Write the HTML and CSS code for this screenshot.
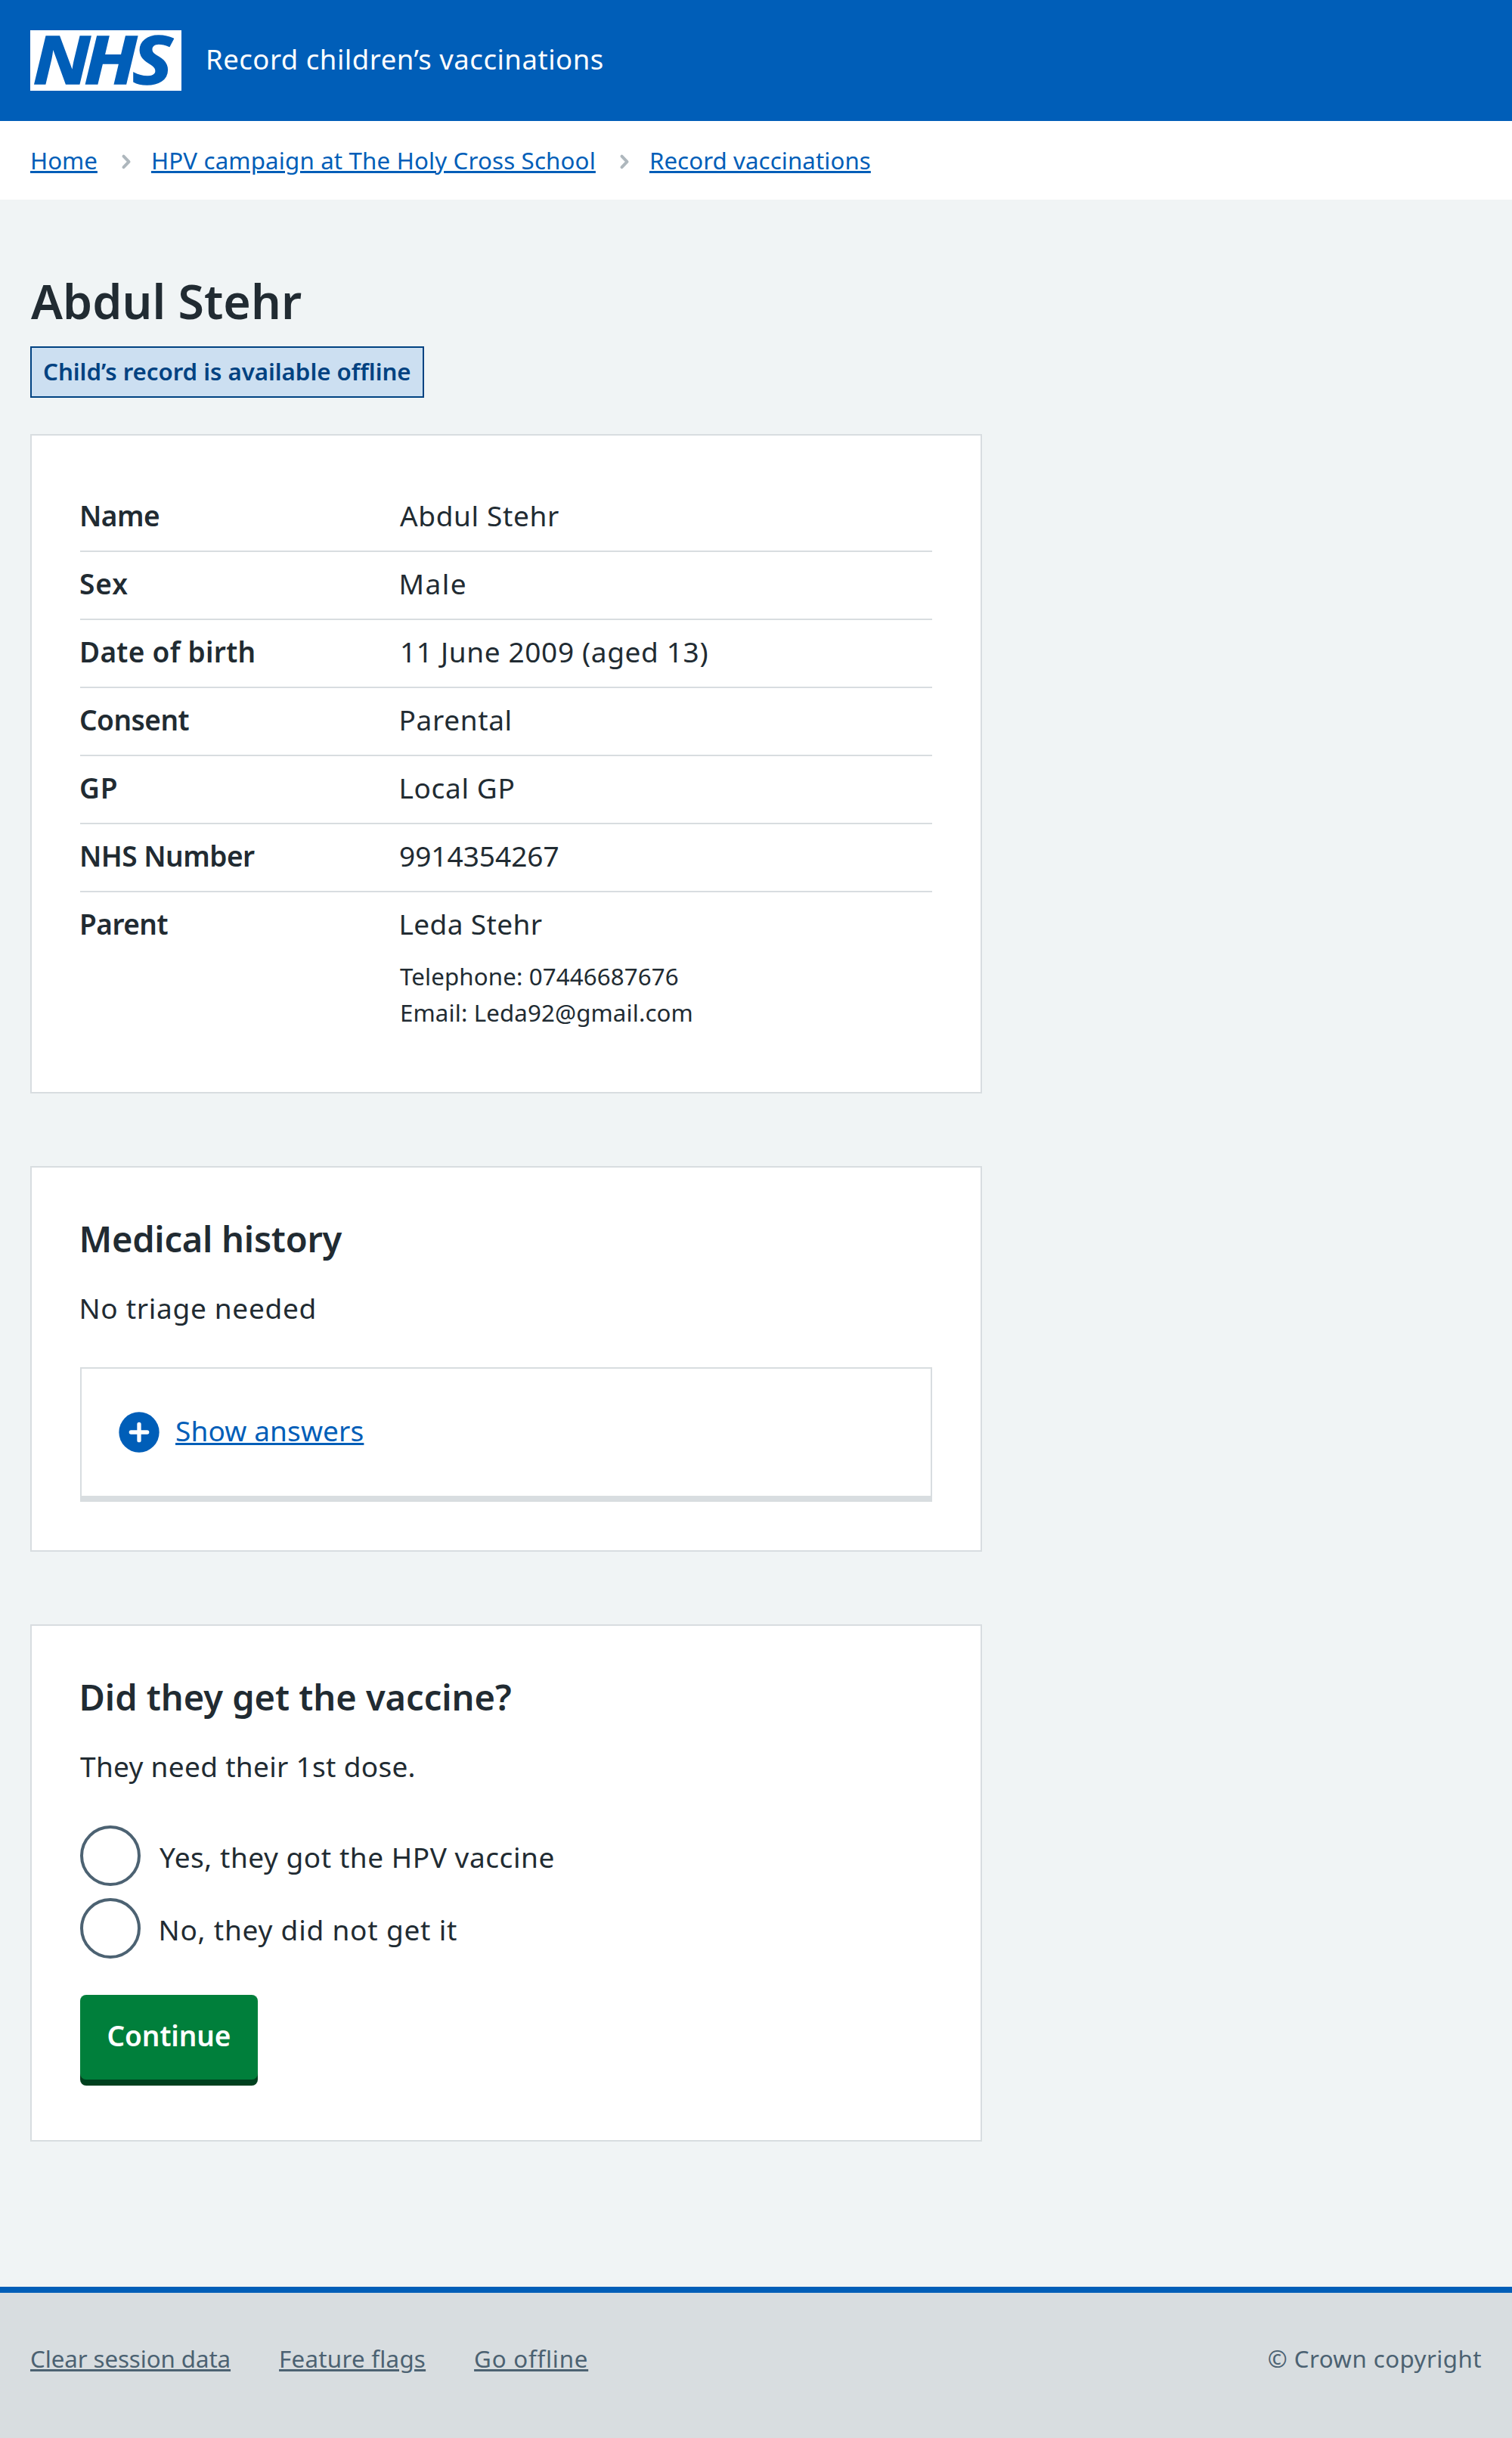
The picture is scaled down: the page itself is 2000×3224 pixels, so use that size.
FILE: index.html
```html
<!DOCTYPE html>
<html lang="en">
<head>
<meta charset="utf-8">
<title>Abdul Stehr – Record children’s vaccinations</title>
<link rel="stylesheet" href="styles.css">
</head>
<body>
<header class="header">
  <svg class="logo" width="200" height="80" viewBox="0 0 200 80" role="img" aria-label="NHS">
    <rect width="200" height="80" fill="#fff"/>
    <text class="logo-text" transform="scale(1.13 1)" x="3.1 62.8 119.5" y="71.3">NHS</text>
  </svg>
  <span class="service-name">Record children’s vaccinations</span>
</header>
<nav class="breadcrumb">
  <a class="crumb crumb-home" href="#">Home</a>
  <svg class="chevron" width="71" height="28" viewBox="0 0 71 28"><path d="M34.5 8.7l7 7.2-7 7.2"/></svg>
  <a class="crumb crumb-campaign" href="#">HPV campaign at The Holy Cross School</a>
  <svg class="chevron" width="71" height="28" viewBox="0 0 71 28"><path d="M34.5 8.7l7 7.2-7 7.2"/></svg>
  <a class="crumb crumb-record" href="#">Record vaccinations</a>
</nav>
<main class="main">
  <h1 class="page-title">Abdul Stehr</h1>
  <strong class="tag">Child’s record is available offline</strong>

  <section class="card card-details">
    <dl class="summary">
      <div class="row"><dt class="tight">Name</dt><dd>Abdul Stehr</dd></div>
      <div class="row"><dt class="loose">Sex</dt><dd class="stem wide">Male</dd></div>
      <div class="row"><dt>Date of birth</dt><dd>11 June 2009 (aged 13)</dd></div>
      <div class="row"><dt class="tight">Consent</dt><dd class="stem">Parental</dd></div>
      <div class="row"><dt class="loose">GP</dt><dd class="stem">Local GP</dd></div>
      <div class="row"><dt class="tight">NHS Number</dt><dd class="digits">9914354267</dd></div>
      <div class="row"><dt class="tight">Parent</dt><dd>
        <p class="stem parent-name">Leda Stehr</p>
        <p class="contact">Telephone: 07446687676<br>Email: Leda92@gmail.com</p></dd></div>
    </dl>
  </section>

  <section class="card card-history">
    <h2 class="heading heading-history">Medical history</h2>
    <p class="text text-triage">No triage needed</p>
    <div class="expander">
      <svg class="plus" width="64" height="64" viewBox="0 0 24 24"><circle cx="12" cy="12" r="10" fill="#005eb8"/><path d="M12 8v8M8 12h8"/></svg>
      <a class="expander-link" href="#">Show answers</a>
    </div>
  </section>

  <section class="card card-vaccine">
    <h2 class="heading heading-vaccine">Did they get the vaccine?</h2>
    <p class="text text-dose">They need their 1st dose.</p>
    <div class="radios">
      <label class="radio"><span class="radio-circle"></span><span class="radio-label">Yes, they got the HPV vaccine</span></label>
      <label class="radio"><span class="radio-circle"></span><span class="radio-label radio-label-no">No, they did not get it</span></label>
    </div>
    <button class="button" type="button">Continue</button>
  </section>
</main>
<footer class="footer">
  <nav class="footer-links">
    <a class="footer-clear" href="#">Clear session data</a>
    <a class="footer-flags" href="#">Feature flags</a>
    <a class="footer-offline" href="#">Go offline</a>
  </nav>
  <p class="copyright">© Crown copyright</p>
</footer>
</body>
</html>
```
FILE: styles.css
```css
* {
  box-sizing: border-box;
}

body {
  margin: 0;
  background: #f0f4f5;
  color: #212b32;
  font: 400 37px/56px "Noto Sans", "Open Sans", sans-serif;
}

a {
  color: #005eb8;
  text-decoration: underline;
  text-decoration-thickness: 3px;
  text-underline-offset: 2px;
}

h1,
h2,
p,
dl,
dd {
  margin: 0;
}

/* Header */
.header {
  display: flex;
  align-items: center;
  gap: 32px;
  height: 160px;
  padding: 0 40px;
  background: #005eb8;
}

.logo {
  display: block;
  flex: none;
}

.logo-text {
  fill: #005eb8;
  stroke: #005eb8;
  stroke-width: 1.4;
  font: italic 700 88.7px "Noto Sans", "Open Sans", sans-serif;
}

.service-name {
  padding-bottom: 4px;
  color: #fff;
  font-size: 36.5px;
  letter-spacing: 0.52px;
}

/* Breadcrumb */
.breadcrumb {
  display: flex;
  align-items: center;
  height: 104px;
  padding: 0 40px;
  background: #fff;
  font-size: 31.25px;
}

.crumb-campaign {
  letter-spacing: 0.16px;
}

.crumb-record {
  letter-spacing: 0.08px;
}

.chevron {
  flex: none;
  fill: none;
  stroke: #aeb7bd;
  stroke-width: 4;
  stroke-linecap: round;
  stroke-linejoin: round;
}

/* Page body */
.main {
  display: flex;
  flex-direction: column;
  align-items: flex-start;
  height: 2760px;
  padding: 98px 40px 0;
}

.page-title {
  margin-left: 1px;
  font-size: 62.5px;
  font-weight: 600;
  line-height: 72px;
  letter-spacing: 0.07px;
}

.tag {
  width: 521px;
  height: 68px;
  margin: 24px 0 48px;
  padding: 7px 15px;
  border: 2px solid #004281;
  background: #ccdff1;
  color: #004281;
  font-size: 31.25px;
  font-weight: 600;
  line-height: 48px;
  letter-spacing: -0.04px;
  white-space: nowrap;
}

.card {
  width: 1259px;
  margin-bottom: 96px;
  padding: 66px 64px 0;
  border: 2px solid #d8dde0;
  background: #fff;
}

.card-details {
  height: 872px;
  padding-top: 64px;
}

.card-history {
  height: 510px;
}

.card-vaccine {
  height: 684px;
  margin-bottom: 0;
}

/* Summary list */
.row {
  display: grid;
  grid-template-columns: 423px 1fr;
  padding: 14px 0 18px;
  border-bottom: 2px solid #d8dde0;
}

.row:last-child {
  border-bottom: 0;
}

dt {
  font-weight: 600;
  letter-spacing: 0.3px;
  text-indent: -1px;
}

dd {
  letter-spacing: 0.65px;
}

dt.tight {
  letter-spacing: -0.5px;
}

dt.loose {
  letter-spacing: 1px;
}

.stem {
  text-indent: -1.5px;
}

.wide {
  letter-spacing: 1.5px;
}

.digits {
  letter-spacing: 0;
  text-indent: -1px;
}

.parent-name {
  letter-spacing: 0.38px;
}

.contact {
  margin-top: 17px;
  font-size: 31.25px;
  line-height: 48px;
  letter-spacing: 0.13px;
}

/* Card text */
.heading {
  margin-left: -1.5px;
  font-size: 47px;
  font-weight: 600;
  line-height: 56px;
}

.heading-history {
  letter-spacing: -0.24px;
}

.heading-vaccine {
  letter-spacing: -0.03px;
}

.text {
  margin-top: 36px;
}

.text-triage {
  text-indent: -1.5px;
  letter-spacing: 0.7px;
}

.text-dose {
  letter-spacing: 0.31px;
}

/* Expander */
.expander {
  display: flex;
  align-items: flex-start;
  gap: 16px;
  height: 178px;
  margin-top: 50px;
  padding: 52px 44px 0;
  border: 2px solid #d8dde0;
  border-bottom-width: 8px;
}

.plus {
  flex: none;
  fill: none;
  stroke: #fff;
  stroke-width: 2;
  stroke-linecap: round;
}

.plus circle {
  stroke: none;
}

.expander-link {
  margin-top: 2px;
  letter-spacing: 0.13px;
}

/* Radios */
.radios {
  display: flex;
  flex-direction: column;
  gap: 16px;
  margin: 50px 0 48px;
}

.radio {
  display: flex;
  align-items: flex-start;
  gap: 25px;
  height: 80px;
}

.radio-circle {
  width: 80px;
  height: 80px;
  border: 4px solid #4c6272;
  border-radius: 50%;
}

.radio-label {
  margin-top: 14px;
  letter-spacing: 0.55px;
}

.radio-label-no {
  text-indent: -1.5px;
  letter-spacing: 0.8px;
}

.button {
  display: block;
  width: 235px;
  height: 112px;
  padding: 0 0 4px;
  border: 0;
  border-radius: 8px;
  background: #007f3b;
  box-shadow: 0 8px 0 #00401e;
  color: #fff;
  font: 600 37px/56px "Noto Sans", "Open Sans", sans-serif;
  letter-spacing: -0.07px;
}

/* Footer */
.footer {
  display: flex;
  justify-content: space-between;
  height: 200px;
  padding: 63px 40px 0;
  border-top: 8px solid #005eb8;
  background: #d8dde0;
  color: #4c6272;
  font-size: 31.25px;
  line-height: 48px;
}

.footer-links {
  display: flex;
  gap: 64px;
}

.footer-links a {
  color: #4c6272;
}

.footer-clear {
  letter-spacing: -0.08px;
}

.footer-flags {
  letter-spacing: 0.27px;
}

.footer-offline {
  letter-spacing: 0.78px;
}

.copyright {
  letter-spacing: 0.45px;
}
```
